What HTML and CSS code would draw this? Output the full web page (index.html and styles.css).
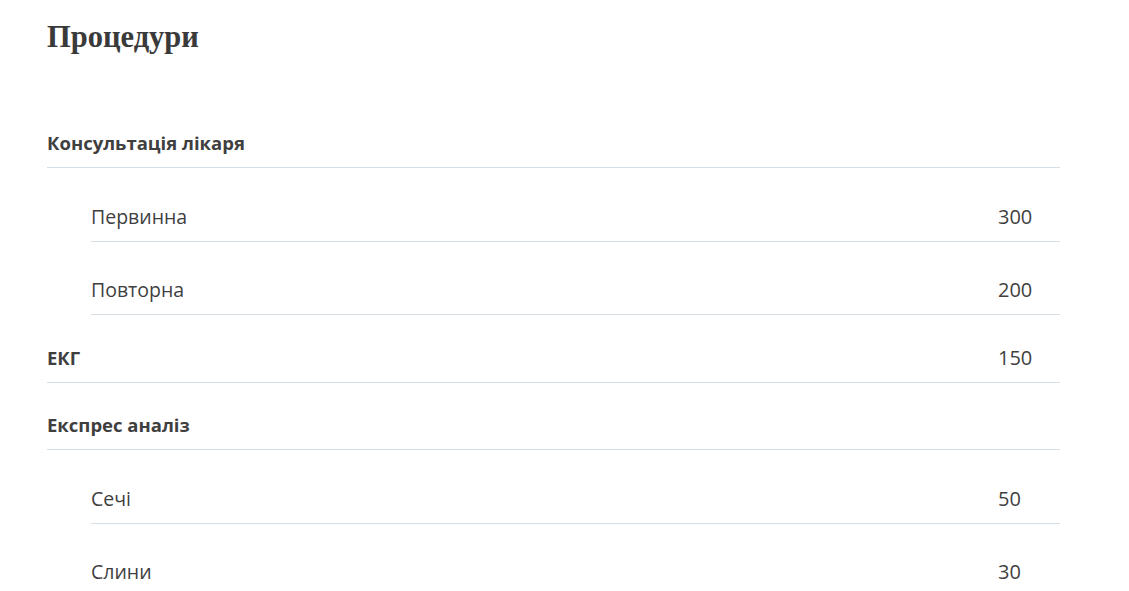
FILE: index.html
```
<!DOCTYPE html>
<html>
<head>
    <title>Процедури</title>
    <link rel="stylesheet" href="styles.css">
</head>
<body>
    <div class="page">
        <h1 class="title">Процедури</h1>
        <ul class="prices">
            <li class="group">
                <div class="row head"><span class="name">Консультація лікаря</span></div>
                <ul class="sub">
                    <li class="row item"><span class="name">Первинна</span><span class="price">300</span></li>
                    <li class="row item"><span class="name">Повторна</span><span class="price">200</span></li>
                </ul>
            </li>
            <li class="group">
                <div class="row head"><span class="name">ЕКГ</span><span class="price">150</span></div>
            </li>
            <li class="group">
                <div class="row head"><span class="name">Експрес аналіз</span></div>
                <ul class="sub">
                    <li class="row item"><span class="name">Сечі</span><span class="price">50</span></li>
                    <li class="row item"><span class="name">Слини</span><span class="price">30</span></li>
                </ul>
            </li>
        </ul>
    </div>
</body>
</html>
```

FILE: styles.css
```
body {
    margin: 0;
    padding: 0;
    background-color: #fff;
    color: #3f3f3f;
    font-family: "Open Sans", sans-serif;
}

.page {
    width: 1013px;
    padding: 20px 0 0 47px;
}

.title {
    font-family: "Liberation Serif", serif;
    font-size: 30.5px;
    font-weight: bold;
    line-height: 34px;
    margin: 0 0 77px;
    color: #3a3a3a;
}

.prices,
.sub {
    list-style: none;
    margin: 0;
    padding: 0;
}

.sub {
    margin-left: 44px;
}

.row {
    display: flex;
    justify-content: space-between;
    line-height: 24px;
    border-bottom: 1px solid #d5dde5;
    padding: 0 26px 12px 0;
}

.head {
    font-weight: 700;
    font-size: 18.5px;
    padding-top: 30.5px;
}

.prices > .group:first-child > .head {
    padding-top: 0;
}

.item {
    font-size: 19.5px;
    padding-top: 36.5px;
}

.price {
    width: 36px;
    font-weight: normal;
    font-size: 20px;
}
```
